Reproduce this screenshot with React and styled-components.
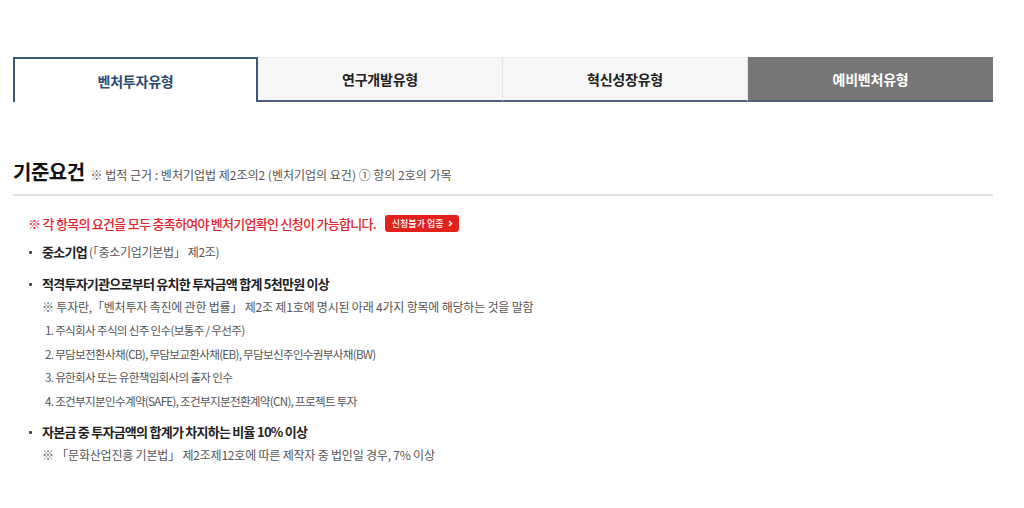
import React from "react";
import styled, { createGlobalStyle } from "styled-components";

const Global = createGlobalStyle`
  html, body { margin: 0; padding: 0; background: #fff; }
  body { font-family: "Noto Sans CJK KR", "Noto Sans", sans-serif; color: #222; }
`;

const Page = styled.div`
  width: 980px;
  padding: 57px 0 0 13px;
`;

const Tabs = styled.ul`
  display: grid;
  grid-template-columns: repeat(4, 1fr);
  list-style: none;
  margin: 0;
  padding: 0;
  height: 45px;
`;

const Tab = styled.li`
  display: flex;
  align-items: center;
  justify-content: center;
  font-size: 14px;
  font-weight: 700;
  letter-spacing: -0.2px;
  box-sizing: border-box;
  ${({ $variant }) =>
    $variant === "active"
      ? `
    color: #2b4c74;
    background: #fff;
    border: 2px solid #3a5878;
    border-bottom: none;
  `
      : $variant === "dark"
      ? `
    color: #fff;
    background: #767676;
    border-bottom: 2px solid #4e6079;
  `
      : `
    color: #222;
    background: #f7f7f7;
    border-top: 1px solid #e9e9e9;
    border-right: 1px solid #e4e4e4;
    border-bottom: 2px solid #4e6079;
  `}
`;

const TitleRow = styled.div`
  display: flex;
  align-items: baseline;
  gap: 6px;
  margin-top: 55px;
  padding-bottom: 8px;
  border-bottom: 2px solid #e2e2e2;
`;

const Title = styled.h2`
  margin: 0;
  font-size: 20px;
  font-weight: 700;
  color: #111;
  letter-spacing: -0.5px;
`;

const Basis = styled.span`
  font-size: 12px;
  color: #555;
`;

const Body = styled.div`
  padding: 18px 0 0 15px;
`;

const Notice = styled.p`
  display: flex;
  align-items: center;
  margin: 0;
  font-size: 13px;
  font-weight: 500;
  color: #e3242b;
  letter-spacing: -0.72px;
`;

const Pill = styled.span`
  display: inline-flex;
  align-items: center;
  gap: 4px;
  margin-left: 9px;
  height: 17px;
  padding: 0 6px 0 7px;
  border-radius: 3px;
  background: #e2201c;
  color: #fff;
  font-size: 9px;
  font-weight: 500;
  letter-spacing: 0;
`;

const List = styled.ul`
  list-style: none;
  margin: 10px 0 0;
  padding: 0;
`;

const Item = styled.li`
  position: relative;
  padding-left: 14px;
  margin-bottom: 14px;
  &::before {
    content: "";
    position: absolute;
    left: 1px;
    top: 8px;
    width: 3px;
    height: 3px;
    border-radius: 1px;
    background: #444;
  }
`;

const Lead = styled.div`
  font-size: 13px;
  font-weight: 700;
  color: #222;
  line-height: 18px;
  letter-spacing: -0.75px;
`;

const Ref = styled.span`
  font-weight: 400;
  color: #555;
  font-size: 12px;
  letter-spacing: -0.3px;
`;

const Note = styled.div`
  margin-top: 4px;
  font-size: 12px;
  color: #555;
  line-height: 19px;
  letter-spacing: -0.2px;
`;

const Steps = styled.ol`
  list-style: none;
  margin: 3px 0 -4px;
  padding: 0 0 0 3px;
`;

const Step = styled.li`
  font-size: 11.6px;
  color: #555;
  line-height: 23.5px;
  letter-spacing: -0.7px;
`;

const tabs = [
  { label: "벤처투자유형", variant: "active" },
  { label: "연구개발유형", variant: "plain" },
  { label: "혁신성장유형", variant: "plain" },
  { label: "예비벤처유형", variant: "dark" },
];

export default function App() {
  return (
    <>
      <Global />
      <Page>
        <Tabs>
          {tabs.map((t) => (
            <Tab key={t.label} $variant={t.variant}>
              {t.label}
            </Tab>
          ))}
        </Tabs>

        <TitleRow>
          <Title>기준요건</Title>
          <Basis>※ 법적 근거 : 벤처기업법 제2조의2 (벤처기업의 요건) ① 항의 2호의 가목</Basis>
        </TitleRow>

        <Body>
          <Notice>
            ※ 각 항목의 요건을 모두 충족하여야 벤처기업확인 신청이 가능합니다.
            <Pill>
              신청불가 업종
              <svg width="5" height="7" viewBox="0 0 5 7">
                <path d="M1 1 L3.5 3.5 L1 6" fill="none" stroke="#fff" strokeWidth="1.6" />
              </svg>
            </Pill>
          </Notice>

          <List>
            <Item>
              <Lead>
                중소기업 <Ref>(「중소기업기본법」 제2조)</Ref>
              </Lead>
            </Item>
            <Item>
              <Lead>적격투자기관으로부터 유치한 투자금액 합계 5천만원 이상</Lead>
              <Note>※ 투자란,「벤처투자 촉진에 관한 법률」 제2조 제1호에 명시된 아래 4가지 항목에 해당하는 것을 말함</Note>
              <Steps>
                <Step>1. 주식회사 주식의 신주 인수(보통주 / 우선주)</Step>
                <Step>2. 무담보전환사채(CB), 무담보교환사채(EB), 무담보신주인수권부사채(BW)</Step>
                <Step>3. 유한회사 또는 유한책임회사의 출자 인수</Step>
                <Step>4. 조건부지분인수계약(SAFE), 조건부지분전환계약(CN), 프로젝트 투자</Step>
              </Steps>
            </Item>
            <Item>
              <Lead>자본금 중 투자금액의 합계가 차지하는 비율 10% 이상</Lead>
              <Note>※ 「문화산업진흥 기본법」 제2조제12호에 따른 제작자 중 법인일 경우, 7% 이상</Note>
            </Item>
          </List>
        </Body>
      </Page>
    </>
  );
}
